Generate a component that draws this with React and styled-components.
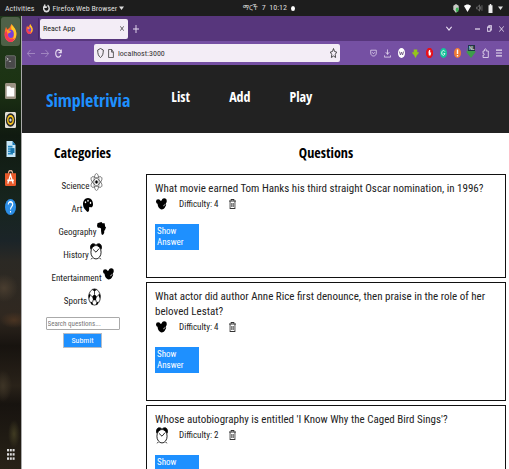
import React from 'react';
import styled, { createGlobalStyle } from 'styled-components';

const BODY = '"Roboto Condensed", "Noto Sans", "Noto Sans Ethiopic", sans-serif';
const HEADING = '"Open Sans Condensed", "Open Sans", sans-serif';

const GlobalStyle = createGlobalStyle`
  * { box-sizing: border-box; }
  body { margin: 0; font-family: ${BODY}; color: #222; background: #fff; overflow: hidden; }
  button { border: 0; padding: 0; background: none; color: inherit; font: inherit; cursor: pointer; }
  h1, h2, h3, ul, p { margin: 0; padding: 0; }
  a { color: inherit; text-decoration: none; }
  svg { display: block; flex: none; }
`;

const Desktop = styled.div`
  display: flex;
  flex-direction: column;
  height: 100vh;
  overflow: hidden;
`;

const SystemBar = styled.header`
  display: flex;
  align-items: center;
  flex: none;
  height: 16px;
  padding: 0 6px 0 5px;
  background: #1d1d1d;
  color: #ddd;
  font-size: 8px;
  white-space: nowrap;
`;

const SystemLeft = styled.div`
  display: flex;
  align-items: center;
  flex: 8 0 0;
  gap: 9px;
`;

const SystemMenu = styled.button`
  display: flex;
  align-items: center;
  gap: 2px;
`;

const Clock = styled.div`
  display: flex;
  align-items: center;
  gap: 4px;
  line-height: 16px;
`;

const ClockMonth = styled.span`
  font-family: "Noto Sans Ethiopic", sans-serif;
  font-size: 7px;
`;

const Dot = styled.span`
  width: 4px;
  height: 5px;
  border-radius: 50%;
  background: #fff;
`;

const SystemTray = styled.div`
  display: flex;
  align-items: center;
  justify-content: flex-end;
  flex: 7 0 0;
  gap: 5px;
`;

const Workspace = styled.div`
  display: flex;
  flex: 1;
  min-height: 0;
`;

const Dock = styled.nav`
  display: flex;
  flex-direction: column;
  flex: none;
  width: 22px;
  padding: 1px 1px 0 1px;
  border-right: 1px solid #aaa;
  background:
    radial-gradient(ellipse 9px 16px at 3px 370px, #3d3426, transparent),
    radial-gradient(ellipse 6px 14px at 14px 418px, #403b22, transparent),
    radial-gradient(ellipse 14px 8px at 14px 304px, #4a3422, transparent),
    radial-gradient(ellipse 14px 14px at 4px 272px, #493d2f, transparent),
    linear-gradient(#20381c 0, #1c3313 70px, #101a10 120px, #17251f 190px, #1b2428 225px, #2b2924 245px, #302820 300px, #17130f 330px, #292219 370px, #17130f 388px, #282217 453px);
`;

const DockButton = styled.button`
  display: flex;
  align-items: center;
  justify-content: center;
  flex: none;
  height: 29px;
  padding-top: 2px;
  border-radius: 3px;
  background: ${(p) => (p.$active ? 'rgba(150, 160, 140, 0.4)' : 'transparent')};
`;

const AppsButton = styled(DockButton)`
  margin-top: auto;
  margin-bottom: 1px;
`;

const Browser = styled.div`
  display: flex;
  flex-direction: column;
  flex: 1;
  min-width: 0;
`;

const TabStrip = styled.div`
  display: flex;
  align-items: center;
  flex: none;
  height: 25px;
  padding: 0 5px 0 4px;
  background: #57367c;
  color: #e8def2;
`;

const PinnedTab = styled.button`
  display: flex;
  align-items: center;
  height: 22px;
  padding-right: 5px;
  border-right: 1px solid #462866;
`;

const Tab = styled.div`
  display: flex;
  align-items: center;
  justify-content: space-between;
  width: 88px;
  height: 20px;
  margin: 0 5px 0 1px;
  padding: 0 4px 0 3px;
  border-radius: 2px;
  background: #f3edf6;
  color: #222;
  font-size: 8px;
`;

const WindowControls = styled.div`
  display: flex;
  align-items: center;
  gap: 7px;
  margin-left: auto;
`;

const TabListButton = styled.button`
  margin-right: 16px;
`;

const Toolbar = styled.div`
  display: flex;
  align-items: center;
  flex: none;
  height: 24px;
  padding: 0 5px;
  background: #7550a3;
  color: #e6dcf0;
`;

const HistoryButtons = styled.div`
  display: flex;
  align-items: center;
  gap: 6px;
  flex: none;
  width: 67px;
`;

const ToolButton = styled.button`
  opacity: ${(p) => (p.disabled ? 0.45 : 1)};
`;

const AddressBar = styled.div`
  display: flex;
  align-items: center;
  flex: 1;
  gap: 4px;
  height: 18px;
  min-width: 0;
  padding: 0 3px;
  border-radius: 2px;
  background: #f3edf6;
  color: #333;
`;

const AddressInput = styled.input`
  flex: 1;
  min-width: 0;
  padding: 0;
  border: 0;
  background: none;
  color: #333;
  font: 8px ${BODY};
  outline: none;
`;

const Extensions = styled.div`
  display: flex;
  align-items: center;
  gap: 4px;
  margin-left: 28px;
`;

const SiteHeader = styled.header`
  display: flex;
  align-items: center;
  flex: none;
  gap: 41px;
  height: 68px;
  padding-left: 24px;
  background: #222;
  color: #fff;
  font-family: ${HEADING};
  font-weight: 700;
`;

const Brand = styled.h1`
  color: #1e90ff;
  font-size: 18px;
  line-height: 24px;
  padding-top: 2px;
`;

const SiteNav = styled.nav`
  display: flex;
  gap: 39px;
  padding-bottom: 4px;
  font-size: 14px;
  line-height: 18px;
`;

const Page = styled.main`
  display: grid;
  grid-template-columns: 121px 1fr;
  column-gap: 3px;
  flex: 1;
  min-height: 0;
  padding: 10px 3px 0 0;
  overflow: hidden;
`;

const SectionTitle = styled.h2`
  color: #000;
  font-family: ${HEADING};
  font-size: 14px;
  font-weight: 700;
  line-height: 20px;
  text-align: center;
`;

const CategoryList = styled.ul`
  list-style: none;
  padding-top: 10px;
`;

const Category = styled.li`
  display: flex;
  justify-content: center;
  height: 23px;
`;

const CategoryLink = styled.button`
  display: flex;
  gap: 1px;
  font-size: 9px;
  line-height: 26px;
`;

const CategoryIcon = styled.span`
  display: flex;
  align-items: center;
  height: 18px;
`;

const SearchForm = styled.form`
  display: flex;
  flex-direction: column;
  align-items: center;
  gap: 3px;
  padding-top: 6px;
`;

const SearchInput = styled.input`
  width: 74px;
  height: 13px;
  padding: 0 1px;
  border: 1px solid #aaa;
  border-radius: 1px;
  font: 7px ${BODY};
  &::placeholder { color: #777; }
`;

const SubmitButton = styled.button`
  width: 39px;
  height: 15px;
  border: 1px solid #b4bcc8;
  background: #1e90ff;
  color: #fff;
  font-size: 8px;
`;

const QuestionList = styled.div`
  display: flex;
  flex-direction: column;
  gap: 4px;
  padding-top: 11px;
`;

const Card = styled.article`
  padding: 6px 8px 27px;
  border: 1px solid #111;
`;

const QuestionText = styled.h3`
  font-size: 11px;
  font-weight: 400;
  line-height: 15px;
`;

const Meta = styled.div`
  display: flex;
  align-items: center;
  height: 16px;
  margin-bottom: 12px;
  font-size: 9px;
`;

const MetaIcon = styled.span`
  display: flex;
  justify-content: center;
  width: 13px;
  margin-right: 11px;
`;

const DeleteButton = styled.button`
  margin-left: 10px;
`;

const AnswerButton = styled.button`
  display: block;
  width: 44px;
  padding: 2px 2px;
  background: #1e90ff;
  color: #fff;
  font-size: 9px;
  line-height: 11px;
  text-align: left;
`;

const Icon = ({ w = 10, h = 11, box = '0 0 20 20', children, fill = 'none', stroke = 'currentColor', sw = 2 }) => (
  <svg width={w} height={h} viewBox={box} preserveAspectRatio="none" fill={fill} stroke={stroke} strokeWidth={sw} aria-hidden="true">
    {children}
  </svg>
);

const Firefox = ({ w, h }) => (
  <Icon w={w} h={h} stroke="none">
    <path d="M10 2C12 0 12 0 12 0c1 3 6 4 7 10 1 6-4 10-9 10S0 16 1 10c0-3 1-4 2-7l2 3c2-1 4-1 5-4z" fill="#ff6a2b" />
    <path d="M12 0c1 3 6 4 7 10 0 5-3 9-8 10 5-4 5-9 2-12-3-3-2-6-1-8z" fill="#ffc928" />
    <path d="M1 11c1 6 5 9 9 9s6-2 7-5c-4 4-13 2-12-7-2 0-3 1-4 3z" fill="#f5365b" />
    <circle cx="10.500" cy="11" r="4.500" fill="#7541d9" />
    <path d="M4 7c3-1 4 1 7 1-1 2-3 2-4 2 0 2-2 1-3-3z" fill="#ff9b2f" />
  </Icon>
);

const Atom = () => (
  <Icon w={13} h={18} stroke="#444" sw={0.8}>
    <ellipse cx="10" cy="10" rx="4" ry="9.500" />
    <ellipse cx="10" cy="10" rx="4" ry="9.500" transform="rotate(60 10 10)" />
    <ellipse cx="10" cy="10" rx="4" ry="9.500" transform="rotate(120 10 10)" />
    <circle cx="10" cy="10" r="2" fill="#000" stroke="none" />
  </Icon>
);

const Palette = () => (
  <Icon w={10} h={14} stroke="none">
    <path fill="#000" d="M10 0c6 0 10 4 10 9 0 4-3 5-6 4-3 0-1 3-2 5-1 3-4 2-6 0-3-2-6-5-6-9C0 4 4 0 10 0z" />
    <g fill="#fff"><circle cx="5" cy="6" r="1.500" /><circle cx="10" cy="4" r="1.500" /><circle cx="15" cy="7" r="1.500" /></g>
  </Icon>
);

const Africa = () => (
  <Icon w={9} h={13} stroke="none">
    <path fill="#000" d="M4 1l6-1 2 2 5 0 1 5 2 1-2 4-2 2 0 3-3 3-3-1-1-5 0-4-3-1-4 0-2-3 1-4z" />
  </Icon>
);

const AlarmClock = () => (
  <Icon w={12} h={17} box="0 0 20 24" stroke="#111" sw={1.4}>
    <path fill="#000" d="M1 8C0 1 5 0 9 2L2 9zM19 8c1-7-4-8-8-6l7 7z" />
    <ellipse cx="10" cy="13" rx="8.500" ry="9.500" fill="#fff" />
    <path d="M5 9l5 4 5-5M4 21l-2 2M16 21l2 2" />
  </Icon>
);

const Mouse = () => (
  <Icon w={11} h={12} fill="#000" stroke="none">
    <circle cx="4" cy="6" r="4" />
    <circle cx="15" cy="5" r="4.500" />
    <path d="M3 8c2-4 9-5 12-2l3 3c1 2 0 4-1 5-1 3-4 5-7 5s-8-5-7-11z" />
    <path d="M13 13c2 0 3-1 4-3" stroke="#888" fill="none" />
  </Icon>
);

const Ball = () => (
  <Icon w={13} h={18} stroke="#111" sw={1}>
    <circle cx="10" cy="10" r="9" fill="#fff" />
    <path fill="#000" stroke="none" d="M10 7l3.500 2.500-1.500 4H8l-1.500-4zM6 2l4 1.500L14 2l-4-1zM1 8l2-2 1 2-2.500 4zM19 8l-2-2-1 2 2.500 4zM4 15l3 1 1 3-3-1zM16 15l-3 1-1 3 3-1z" />
    <path d="M10 3v4M4 8l3 2M16 8l-3 2M7 16l1-3M13 16l-1-3" />
  </Icon>
);

const Trash = () => (
  <Icon w={7} h={10} stroke="#333" sw={2.4}>
    <path d="M0 4h20M6 4V1h8v3M3 4v15h14V4M8 8v8M12 8v8" />
  </Icon>
);

const dockApps = [
  ['Firefox', <Firefox key="i" w={13} h={18} />],
  ['Terminal', <Icon key="i" w={11} h={14} stroke="#888" sw={1}><rect x="1" y="1" width="18" height="18" rx="2" fill="#494949" /><path d="M3 4l3 2-3 2M7 9h4" stroke="#fff" /></Icon>],
  ['Files', <Icon key="i" w={11} h={16} stroke="none"><rect width="20" height="20" rx="2" fill="#9c9384" /><path d="M3 4h6l2 2h6v11H3z" fill="#fff" /></Icon>],
  ['Rhythmbox', <Icon key="i" w={11} h={16} stroke="none"><rect width="20" height="20" rx="2" fill="#e2dfd5" /><circle cx="10" cy="10" r="8.500" fill="#26282b" /><circle cx="10" cy="10" r="5" fill="none" stroke="#f8c51c" strokeWidth="2.500" /><circle cx="10" cy="10" r="2" fill="#ddd" /></Icon>],
  ['Writer', <Icon key="i" w={10} h={16} stroke="none"><path d="M1 0h12l6 5v15H1z" fill="#c7e6f7" /><path d="M13 0l6 5h-6z" fill="#1677b4" /><path d="M4 7h9M4 10h12M4 13h12M4 16h10" stroke="#2587be" /><path d="M9 9h8v6H9z" fill="#1773aa" /></Icon>],
  ['Software', <Icon key="i" w={11} h={16} stroke="none"><path d="M6 5c0-6 8-6 8 0" fill="none" stroke="#d6a58d" /><path d="M0 4h20v14q0 2-2 2H2q-2 0-2-2z" fill="#e95a2b" /><path d="M5 17l5-11 5 11M4 13h12" fill="none" stroke="#fff" strokeWidth="2" /></Icon>],
  ['Help', <Icon key="i" w={11} h={16} stroke="none"><circle cx="10" cy="10" r="10" fill="#2c8ee5" /><path d="M6 7c0-5 8-4 8 0 0 2-4 3-4 6M10 15v2" fill="none" stroke="#fff" strokeWidth="2" /></Icon>],
];

const extensions = [
  ['Save to Pocket', <Icon key="i" w={7} h={8}><path d="M2 3h16v7c0 10-16 10-16 0zM6 8l4 4 4-4" /></Icon>],
  ['Downloads', <Icon key="i" w={7} h={9}><path d="M10 1v11M5 7l5 5 5-5M1 14v4h18v-4" /></Icon>],
  ['Wikiwand', <Icon key="i" w={7} h={10} stroke="none"><circle cx="10" cy="10" r="10" fill="#fff" /><path d="M4 7l3 7 3-6 3 6 3-7" stroke="#6b5480" strokeWidth="2" fill="none" /></Icon>],
  ['Download helper', <Icon key="i" w={7} h={9} stroke="none"><path d="M5 1h10v6h5l-3 5h-2l-5 8-5-8H3L0 7h5z" fill="#94c51b" /></Icon>],
  ['Ad blocker', <Icon key="i" w={7} h={10} stroke="none"><path d="M6 0h8l6 6v8l-6 6H6l-6-6V6z" fill="#e5101b" /><path d="M7 8l2-4h3v5h3l-2 6H8z" fill="#fff" /></Icon>],
  ['Grammar check', <Icon key="i" w={7} h={10} stroke="none"><circle cx="10" cy="10" r="10" fill="#15c39a" /><path d="M14 7c-3-4-9-2-9 3s7 7 9 1h-4" stroke="#fff" strokeWidth="2" fill="none" /></Icon>],
  ['Alerts', <Icon key="i" w={7} h={10} stroke="none"><circle cx="10" cy="10" r="10" fill="#f17a35" /><path d="M10 3v9M10 14v3" stroke="#fff" strokeWidth="4" /></Icon>],
];

const Badge = styled.span`
  position: absolute;
  top: -3px;
  left: 2px;
  padding: 0 1px;
  background: #203646;
  color: #fff;
  font-size: 5px;
  line-height: 6px;
`;

const BadgedButton = styled(ToolButton)`
  position: relative;
`;

const ExtensionButton = styled(ToolButton)`
  display: flex;
  justify-content: center;
  width: 10px;
`;

const categories = [
  ['Science', Atom],
  ['Art', Palette],
  ['Geography', Africa],
  ['History', AlarmClock],
  ['Entertainment', Mouse],
  ['Sports', Ball],
];

const questions = [
  { text: 'What movie earned Tom Hanks his third straight Oscar nomination, in 1996?', difficulty: 4, Symbol: Mouse },
  { text: 'What actor did author Anne Rice first denounce, then praise in the role of her beloved Lestat?', difficulty: 4, Symbol: Mouse },
  { text: "Whose autobiography is entitled 'I Know Why the Caged Bird Sings'?", difficulty: 2, Symbol: AlarmClock },
];

const Caret = () => <Icon w={5} h={4} fill="currentColor" stroke="none"><path d="M0 2h20L10 20z" /></Icon>;

function SystemPanel() {
  return (
    <SystemBar>
      <SystemLeft>
        <button>Activities</button>
        <SystemMenu>
          <Icon w={7} h={9} sw={4}><path d="M13 3c8 5 5 14-3 14S-1 8 5 4M5 1v6h6" /></Icon>
          Firefox Web Browser
          <Caret />
        </SystemMenu>
      </SystemLeft>
      <Clock><ClockMonth>ማርች</ClockMonth><span>7&nbsp; 10:12</span><Dot /></Clock>
      <SystemTray>
        <Icon w={6} h={9} stroke="none"><path d="M10 0l9 4v8l-9 8-9-8V4z" fill="#c9cbc7" /><circle cx="14" cy="13" r="5" fill="#3eb355" /></Icon>
        <Icon w={7} h={8} fill="#fff" stroke="none"><path d="M0 5c6-5 14-5 20 0L10 20z" /></Icon>
        <Icon w={7} h={8} stroke="#777"><path d="M1 8h4l5-6v16l-5-6H1zM13 6v8M17 3v14" /></Icon>
        <Icon w={5} h={9} fill="#eee" stroke="none"><path d="M2 3h5V0h6v3h5v17H2z" /></Icon>
        <Caret />
      </SystemTray>
    </SystemBar>
  );
}

function BrowserChrome() {
  return (
    <>
      <TabStrip>
        <PinnedTab aria-label="Pinned tab"><Firefox w={7} h={10} /></PinnedTab>
        <Tab>
          <span>React App</span>
          <button aria-label="Close tab"><Icon w={4} h={5} sw={3}><path d="M1 1l18 18M19 1L1 19" /></Icon></button>
        </Tab>
        <button aria-label="New tab"><Icon w={6} h={8} sw={3}><path d="M10 0v20M0 10h20" /></Icon></button>
        <WindowControls>
          <TabListButton aria-label="List all tabs"><Icon w={6} h={5} sw={4}><path d="M1 3l9 13 9-13" /></Icon></TabListButton>
          <button aria-label="Minimize"><Icon w={5} h={6} sw={4}><path d="M0 10h20" /></Icon></button>
          <button aria-label="Restore"><Icon w={5} h={7} sw={3}><path d="M2 6h11v12H2zM7 5V2h11v12h-4" /></Icon></button>
          <button aria-label="Close window"><Icon w={5} h={6} sw={3}><path d="M1 1l18 18M19 1L1 19" /></Icon></button>
        </WindowControls>
      </TabStrip>
      <Toolbar>
        <HistoryButtons>
          <ToolButton disabled aria-label="Back"><Icon w={8} h={9}><path d="M20 10H1M9 2l-8 8 8 8" /></Icon></ToolButton>
          <ToolButton disabled aria-label="Forward"><Icon w={8} h={9}><path d="M0 10h19M11 2l8 8-8 8" /></Icon></ToolButton>
          <ToolButton aria-label="Reload"><Icon w={7} h={9} sw={3}><path d="M17 13C13 21 2 19 2 10S13-1 17 6M18 1v7h-8" /></Icon></ToolButton>
        </HistoryButtons>
        <AddressBar>
          <Icon w={7} h={10}><path d="M10 1l8 3c0 8-2 12-8 15C4 16 2 12 2 4z" /></Icon>
          <Icon w={6} h={9}><path d="M2 1h10l6 6v12H2zM12 1v6h6" /></Icon>
          <AddressInput aria-label="Address" defaultValue="localhost:3000" />
          <button aria-label="Bookmark"><Icon w={7} h={10}><path d="M10 1l3 6 6 1-4 5 1 6-6-3-6 3 1-6-4-5 6-1z" /></Icon></button>
        </AddressBar>
        <Extensions>
          {extensions.map(([name, icon]) => <ExtensionButton key={name} aria-label={name}>{icon}</ExtensionButton>)}
          <BadgedButton aria-label="VPN">
            <Icon w={10} h={10} stroke="none"><path d="M3 0h14v7h3L10 20 0 7h3z" fill="#3d9d4a" /></Icon>
            <Badge>NL</Badge>
          </BadgedButton>
          <ExtensionButton aria-label="Extensions"><Icon w={7} h={10}><path d="M3 6h4c-1-6 6-6 5 0h6v13H3v-5c5 1 5-4 0-3z" /></Icon></ExtensionButton>
          <ExtensionButton aria-label="Menu"><Icon w={6} h={8} sw={3}><path d="M0 3h20M0 10h20M0 17h20" /></Icon></ExtensionButton>
        </Extensions>
      </Toolbar>
    </>
  );
}

export default function App() {
  return (
    <Desktop>
      <GlobalStyle />
      <SystemPanel />
      <Workspace>
        <Dock aria-label="Applications">
          {dockApps.map(([name, icon], i) => <DockButton key={name} $active={i === 0} aria-label={name}>{icon}</DockButton>)}
          <AppsButton aria-label="Show applications">
            <Icon w={8} h={12} fill="#ddd" stroke="none">
              {[0, 7, 14].map((y) => [0, 7, 14].map((x) => <rect key={`${x}-${y}`} x={x} y={y} width="5" height="4" />))}
            </Icon>
          </AppsButton>
        </Dock>
        <Browser>
          <BrowserChrome />
          <SiteHeader>
            <Brand>Simpletrivia</Brand>
            <SiteNav>
              <a href="#list">List</a>
              <a href="#add">Add</a>
              <a href="#play">Play</a>
            </SiteNav>
          </SiteHeader>
          <Page>
            <aside>
              <SectionTitle>Categories</SectionTitle>
              <CategoryList>
                {categories.map(([name, Symbol]) => (
                  <Category key={name}>
                    <CategoryLink>{name}<CategoryIcon><Symbol /></CategoryIcon></CategoryLink>
                  </Category>
                ))}
              </CategoryList>
              <SearchForm onSubmit={(e) => e.preventDefault()}>
                <SearchInput aria-label="Search questions" placeholder="Search questions..." />
                <SubmitButton type="submit">Submit</SubmitButton>
              </SearchForm>
            </aside>
            <section>
              <SectionTitle>Questions</SectionTitle>
              <QuestionList>
                {questions.map(({ text, difficulty, Symbol }) => (
                  <Card key={text}>
                    <QuestionText>{text}</QuestionText>
                    <Meta>
                      <MetaIcon><Symbol /></MetaIcon>
                      <span>Difficulty: {difficulty}</span>
                      <DeleteButton aria-label="Delete question"><Trash /></DeleteButton>
                    </Meta>
                    <AnswerButton>Show Answer</AnswerButton>
                  </Card>
                ))}
              </QuestionList>
            </section>
          </Page>
        </Browser>
      </Workspace>
    </Desktop>
  );
}
